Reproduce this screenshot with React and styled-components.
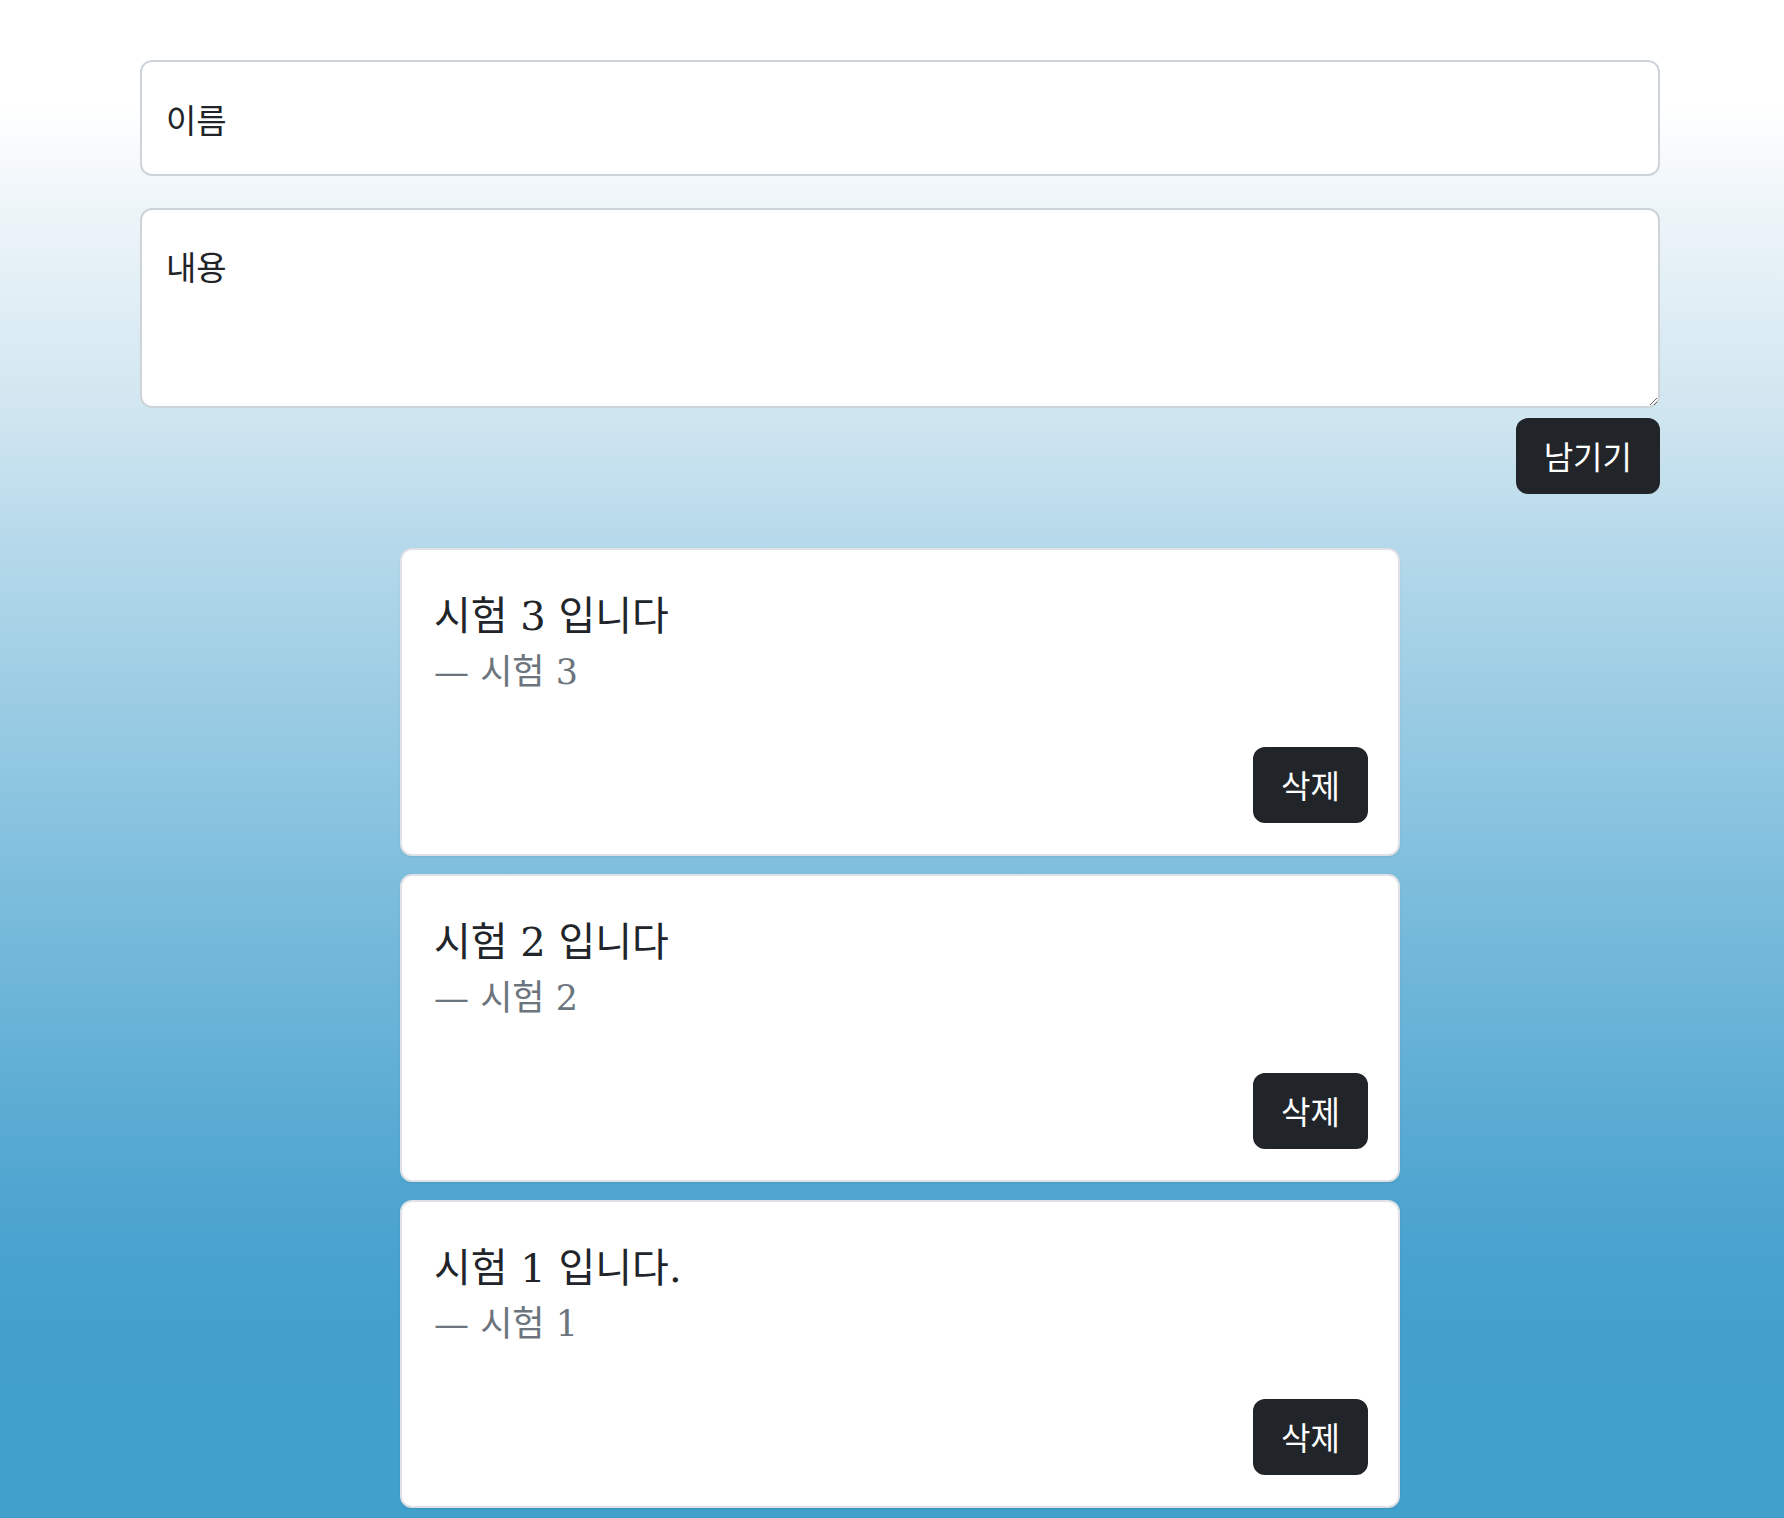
import React from "react";
import styled, { createGlobalStyle } from "styled-components";

const FONT = `"DejaVu Serif", "Noto Sans CJK KR", serif`;

const Global = createGlobalStyle`
  html, body { margin: 0; padding: 0; }
  body {
    font-family: ${FONT};
    color: #212529;
    background: #42a0cd;
  }
  * { box-sizing: border-box; }
`;

const Page = styled.div`
  min-height: 1518px;
  padding: 60px 0 40px 140px;
  background: linear-gradient(
    to bottom,
    #ffffff 0px,
    #ffffff 105px,
    #eef5f9 205px,
    #cfe5f0 420px,
    #b5d9ea 545px,
    #80bfdd 865px,
    #4ea5d0 1200px,
    #43a0cd 1330px,
    #42a0cd 1518px
  );
`;

const Container = styled.div`
  width: 1520px;
`;

const Form = styled.form`
  display: flex;
  flex-direction: column;
`;

const fieldBase = `
  width: 100%;
  border: 2px solid #ced4da;
  border-radius: 12px;
  background: #ffffff;
  font-family: ${FONT};
  font-size: 33px;
  line-height: 48px;
  color: #212529;
  outline: none;
  &::placeholder { color: #212529; opacity: 1; }
`;

const TextInput = styled.input`
  ${fieldBase}
  height: 116px;
  padding: 6px 24px 0;
`;

const TextArea = styled.textarea`
  ${fieldBase}
  display: block;
  height: 200px;
  margin-top: 32px;
  padding: 35px 24px 29px;
  resize: vertical;
`;

const ActionRow = styled.div`
  display: flex;
  justify-content: flex-end;
  margin-top: 10px;
`;

const DarkButton = styled.button`
  height: 76px;
  padding: 3px 26px 0;
  border: 2px solid #212529;
  border-radius: 12px;
  background: #212529;
  color: #ffffff;
  font-family: ${FONT};
  font-size: 32px;
  line-height: 48px;
  cursor: pointer;
`;

const List = styled.div`
  width: 1000px;
  margin: 54px auto 0;
  display: flex;
  flex-direction: column;
  gap: 18px;
`;

const Card = styled.div`
  display: flex;
  flex-direction: column;
  background: #ffffff;
  border: 2px solid #dee2e6;
  border-radius: 12px;
  padding: 36px 30px 31px 32px;
  box-shadow: 0 1px 2px rgba(0, 0, 0, 0.08);
`;

const Title = styled.p`
  margin: 0;
  font-size: 40px;
  line-height: 60px;
  color: #212529;
`;

const Author = styled.p`
  margin: 0;
  font-size: 35px;
  line-height: 52px;
  color: #6c757d;
  &::before { content: "— "; }
`;

const CardFooter = styled.div`
  display: flex;
  justify-content: flex-end;
  margin-top: 49px;
`;

const entries = [
  { id: 3, text: "시험 3 입니다", name: "시험 3" },
  { id: 2, text: "시험 2 입니다", name: "시험 2" },
  { id: 1, text: "시험 1 입니다.", name: "시험 1" },
];

export default function App() {
  return (
    <>
      <Global />
      <Page>
        <Container>
          <Form onSubmit={(e) => e.preventDefault()}>
            <TextInput placeholder="이름" />
            <TextArea placeholder="내용" />
            <ActionRow>
              <DarkButton type="submit">남기기</DarkButton>
            </ActionRow>
          </Form>
          <List>
            {entries.map((e) => (
              <Card key={e.id}>
                <Title>{e.text}</Title>
                <Author>{e.name}</Author>
                <CardFooter>
                  <DarkButton type="button">삭제</DarkButton>
                </CardFooter>
              </Card>
            ))}
          </List>
        </Container>
      </Page>
    </>
  );
}
